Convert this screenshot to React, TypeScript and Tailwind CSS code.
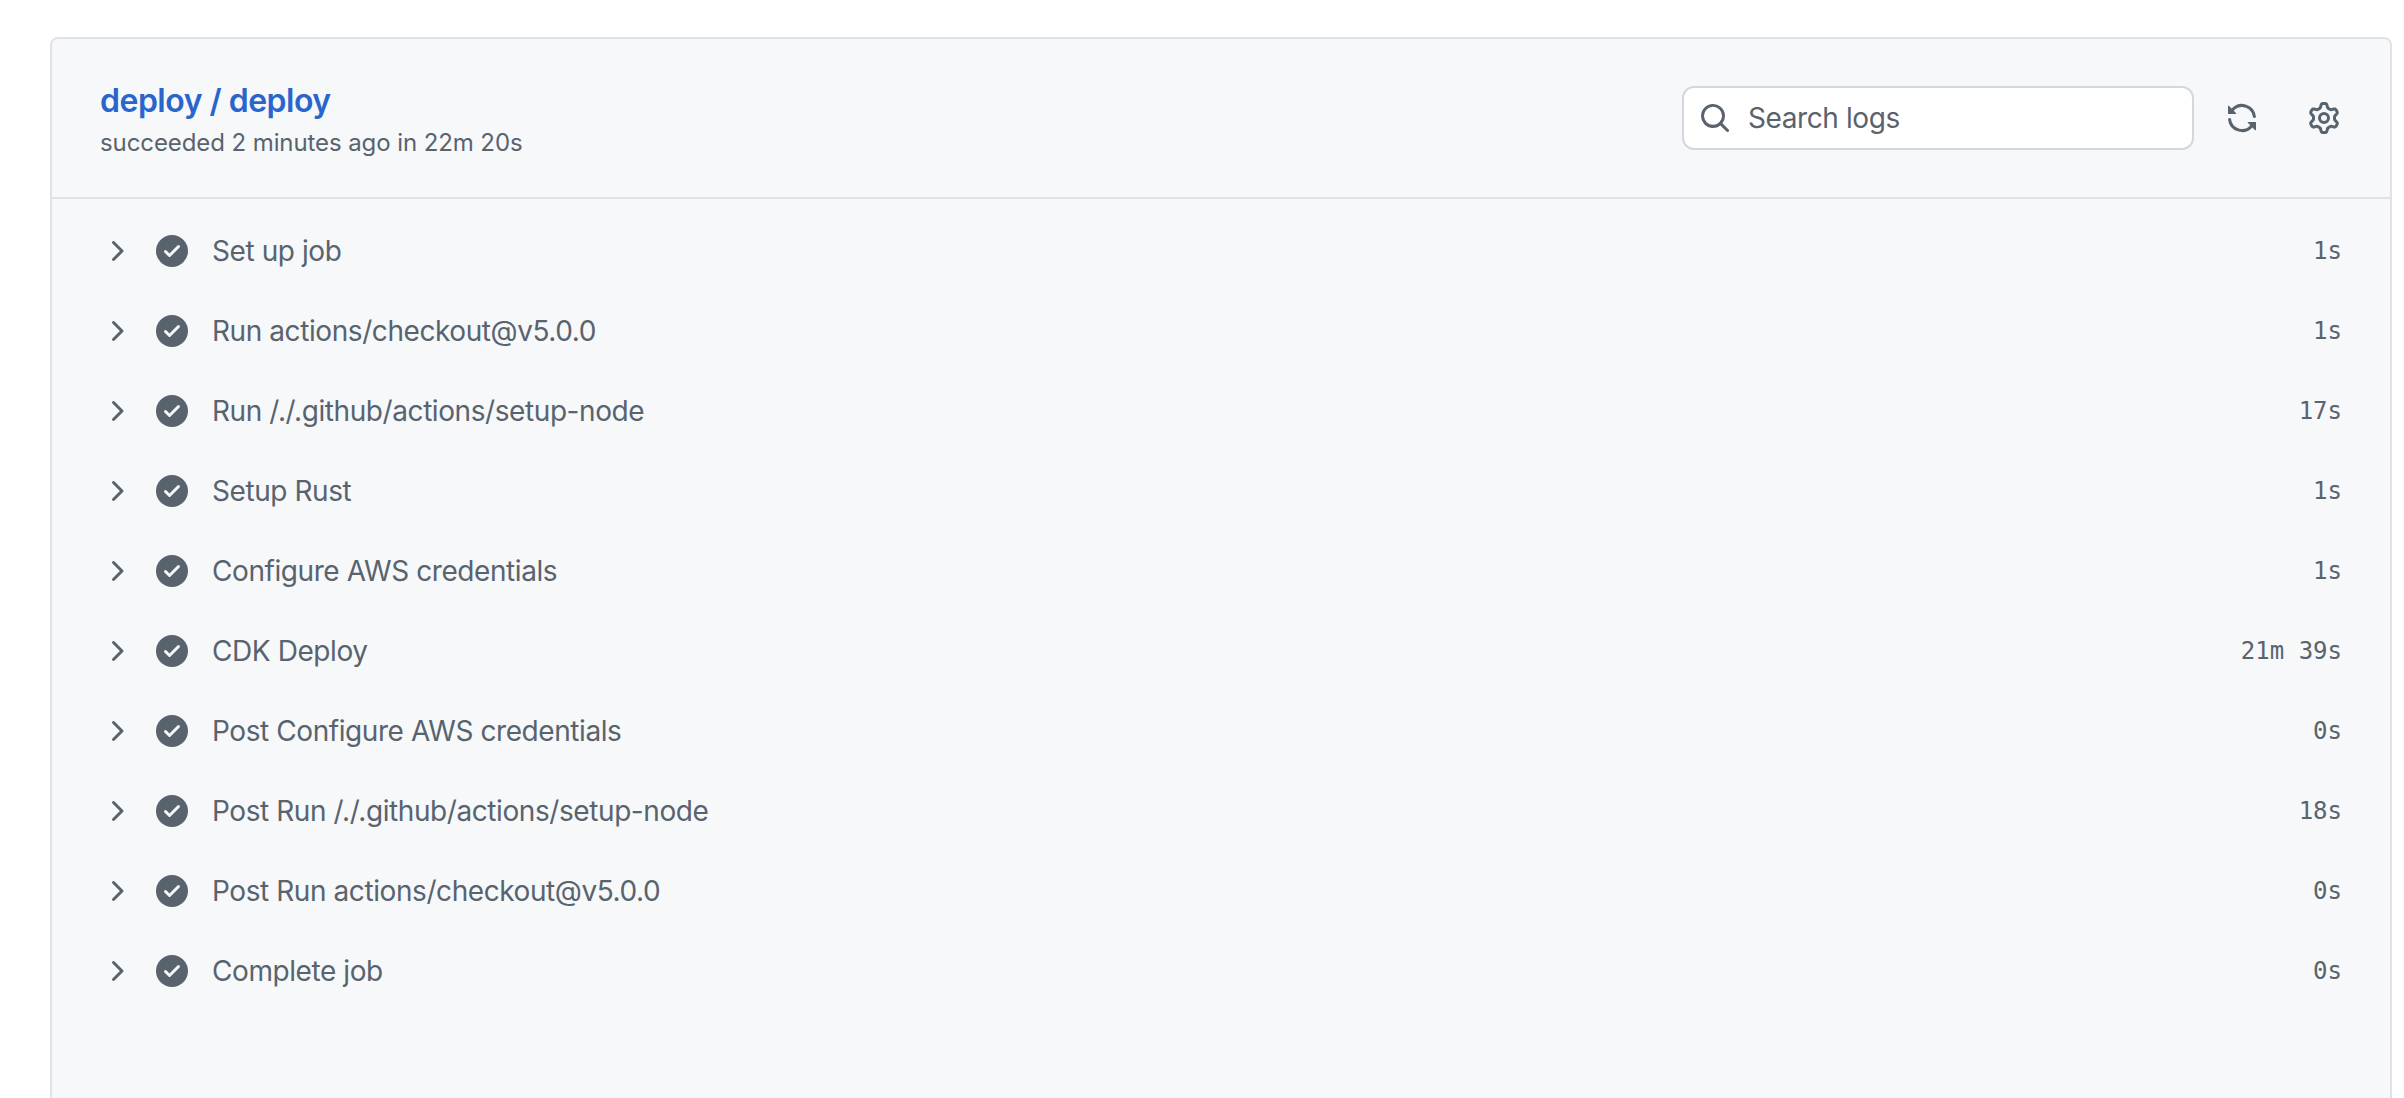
const CHECK = "M8 16A8 8 0 1 1 8 0a8 8 0 0 1 0 16Zm3.78-9.72a.751.751 0 0 0-.018-1.042.751.751 0 0 0-1.042-.018L6.75 9.19 5.28 7.72a.751.751 0 0 0-1.042.018.751.751 0 0 0-.018 1.042l2 2a.75.75 0 0 0 1.06 0Z";
const CHEVRON = "M6.22 3.22a.75.75 0 0 1 1.06 0l4.25 4.25a.75.75 0 0 1 0 1.06l-4.25 4.25a.751.751 0 0 1-1.042-.018.751.751 0 0 1-.018-1.042L9.94 8 6.22 4.28a.75.75 0 0 1 0-1.06Z";
const SEARCH = "M10.68 11.74a6 6 0 0 1-7.922-8.982 6 6 0 0 1 8.982 7.922l3.04 3.04a.749.749 0 0 1-.326 1.275.749.749 0 0 1-.734-.215ZM11.5 7a4.499 4.499 0 1 0-8.997 0A4.499 4.499 0 0 0 11.5 7Z";
const SYNC = "M1.705 8.005a.75.75 0 0 1 .834.656 5.5 5.5 0 0 0 9.592 2.97l-1.204-1.204a.25.25 0 0 1 .177-.427h3.646a.25.25 0 0 1 .25.25v3.646a.25.25 0 0 1-.427.177l-1.38-1.38A7.002 7.002 0 0 1 1.05 8.84a.75.75 0 0 1 .656-.834ZM8 2.5a5.487 5.487 0 0 0-4.131 1.869l1.204 1.204A.25.25 0 0 1 4.896 6H1.25A.25.25 0 0 1 1 5.75V2.104a.25.25 0 0 1 .427-.177l1.38 1.38A7.002 7.002 0 0 1 14.95 7.16a.75.75 0 0 1-1.49.178A5.5 5.5 0 0 0 8 2.5Z";
const GEAR = "M8 0a8.2 8.2 0 0 1 .701.031C9.444.095 9.99.645 10.16 1.29l.288 1.107c.018.066.079.158.212.224.231.114.454.243.668.386.123.082.233.09.299.071l1.103-.303c.644-.176 1.392.021 1.82.63.27.385.506.792.704 1.218.315.675.111 1.422-.364 1.891l-.814.806c-.049.048-.098.147-.088.294.016.257.016.515 0 .772-.01.147.038.246.088.294l.814.806c.475.469.679 1.216.364 1.891a7.977 7.977 0 0 1-.704 1.217c-.428.61-1.176.807-1.82.63l-1.102-.302c-.067-.019-.177-.011-.3.071a5.909 5.909 0 0 1-.668.386c-.133.066-.194.158-.211.224l-.29 1.106c-.168.646-.715 1.196-1.458 1.26a8.006 8.006 0 0 1-1.402 0c-.743-.064-1.289-.614-1.458-1.26l-.289-1.106c-.018-.066-.079-.158-.212-.224a5.738 5.738 0 0 1-.668-.386c-.123-.082-.233-.09-.299-.071l-1.103.303c-.644.176-1.392-.021-1.82-.63a8.12 8.12 0 0 1-.704-1.218c-.315-.675-.111-1.422.363-1.891l.815-.806c.05-.048.098-.147.088-.294a6.214 6.214 0 0 1 0-.772c.01-.147-.038-.246-.088-.294l-.815-.806C.635 6.045.431 5.298.746 4.623a7.92 7.92 0 0 1 .704-1.217c.428-.61 1.176-.807 1.82-.63l1.102.302c.067.019.177.011.3-.071.214-.143.437-.272.668-.386.133-.066.194-.158.211-.224l.29-1.106C6.009.645 6.556.095 7.299.03 7.53.01 7.764 0 8 0Zm-.571 1.525c-.036.003-.108.036-.137.146l-.289 1.105c-.147.561-.549.967-.998 1.189-.173.086-.34.183-.5.29-.417.278-.97.423-1.529.27l-1.103-.303c-.109-.03-.175.016-.195.045-.22.312-.412.644-.573.99-.014.031-.021.11.059.19l.815.806c.411.406.562.957.53 1.456a4.709 4.709 0 0 0 0 .582c.032.499-.119 1.05-.53 1.456l-.815.806c-.081.08-.073.159-.059.19.162.346.353.677.573.989.02.03.085.076.195.046l1.102-.303c.56-.153 1.113-.008 1.53.27.161.107.328.204.501.29.447.222.85.629.997 1.189l.289 1.105c.029.109.101.143.137.146a6.6 6.6 0 0 0 1.142 0c.036-.003.108-.036.137-.146l.289-1.105c.147-.561.549-.967.998-1.189.173-.086.34-.183.5-.29.417-.278.97-.423 1.529-.27l1.103.303c.109.029.175-.016.195-.045.22-.313.411-.644.573-.99.014-.031.021-.11-.059-.19l-.815-.806c-.411-.406-.562-.957-.53-1.456a4.709 4.709 0 0 0 0-.582c-.032-.499.119-1.05.53-1.456l.815-.806c.081-.08.073-.159.059-.19a6.464 6.464 0 0 0-.573-.989c-.02-.03-.085-.076-.195-.046l-1.102.303c-.56.153-1.113.008-1.53-.27a4.44 4.44 0 0 0-.501-.29c-.447-.222-.85-.629-.997-1.189l-.289-1.105c-.029-.11-.101-.143-.137-.146a6.6 6.6 0 0 0-1.142 0ZM11 8a3 3 0 1 1-6 0 3 3 0 0 1 6 0ZM9.5 8a1.5 1.5 0 1 0-3.001.001A1.5 1.5 0 0 0 9.5 8Z";

function Icon({ d }: { d: string }) {
  return (
    <svg viewBox="0 0 16 16" fill="currentColor" className="w-8 h-8 shrink-0 text-[#59636e]">
      <path d={d} />
    </svg>
  );
}

const steps: [string, string][] = [
  ["Set up job", "1s"],
  ["Run actions/checkout@v5.0.0", "1s"],
  ["Run /./.github/actions/setup-node", "17s"],
  ["Setup Rust", "1s"],
  ["Configure AWS credentials", "1s"],
  ["CDK Deploy", "21m 39s"],
  ["Post Configure AWS credentials", "0s"],
  ["Post Run /./.github/actions/setup-node", "18s"],
  ["Post Run actions/checkout@v5.0.0", "0s"],
  ["Complete job", "0s"],
];

export default function App() {
  return (
    <div className="h-screen overflow-hidden bg-white pt-[37px] pl-[50px] pr-[12px] font-['Inter',sans-serif]">
      <div className="h-[1100px] bg-[#f6f8fa] border-2 border-[#dfe3e8] rounded-t-lg">
        <div className="flex items-center justify-between h-[160px] pl-[48px] pr-[50px] border-b-2 border-[#dfe3e8]">
          <div className="pt-[2px]">
            <div className="text-[32px] leading-[48px] font-semibold tracking-[-0.5px] text-[#2a65cc]">deploy / deploy</div>
            <div className="text-[24px] leading-[36px] tracking-[-0.09px] text-[#59636e]">succeeded 2 minutes ago in 22m 20s</div>
          </div>
          <div className="flex items-center">
            <div className="w-[512px] h-[64px] flex items-center gap-[17px] pl-[15px] bg-white border-2 border-[#d3d8de] rounded-xl text-[28px] tracking-[-0.4px] text-[#59636e]">
              <Icon d={SEARCH} />
              <span>Search logs</span>
            </div>
            <div className="ml-[32px] flex items-center gap-[50px]">
              <Icon d={SYNC} />
              <Icon d={GEAR} />
            </div>
          </div>
        </div>
        <div className="pt-[12px]">
          {steps.map(([name, time]) => (
            <div key={name} className="flex items-center h-[80px] pl-[48px] pr-[48px] text-[#59636e]">
              <Icon d={CHEVRON} />
              <div className="ml-[24px]"><Icon d={CHECK} /></div>
              <span className="ml-[24px] text-[28px] tracking-[-0.42px] flex-1">{name}</span>
              <span className="text-[24px] font-['DejaVu_Sans_Mono',monospace]">{time}</span>
            </div>
          ))}
        </div>
      </div>
    </div>
  );
}
